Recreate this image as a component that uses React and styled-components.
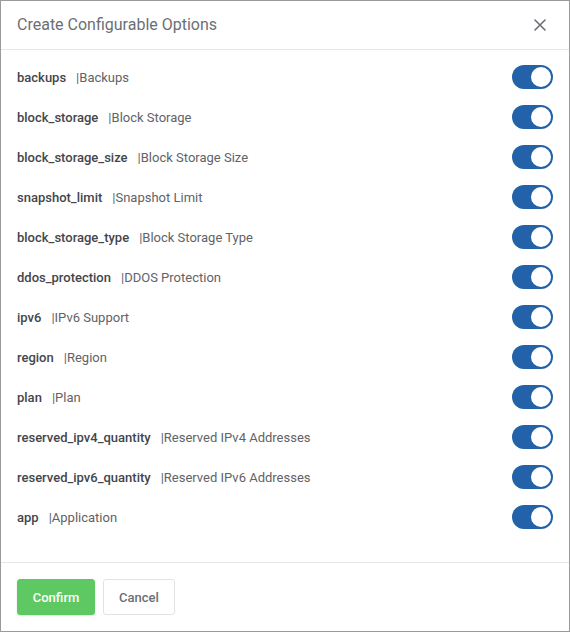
import React, { useState } from "react";
import styled, { createGlobalStyle } from "styled-components";

const Global = createGlobalStyle`
  html, body { margin: 0; padding: 0; background: #fff; }
  * { box-sizing: border-box; }
  body { font-family: Roboto, "Liberation Sans", Arial, sans-serif; }
`;

const Modal = styled.div`
  width: 570px;
  height: 632px;
  border: 1px solid #9b9b9b;
  background: #fff;
  display: flex;
  flex-direction: column;
`;

const Header = styled.div`
  height: 49px;
  display: flex;
  align-items: center;
  justify-content: space-between;
  padding: 0 16px 1px;
  border-bottom: 1px solid #e6e6ea;
`;

const Title = styled.h4`
  margin: 0;
  font-size: 16px;
  font-weight: 400;
  color: #6b6f75;
`;

const Close = styled.button`
  border: 0;
  background: transparent;
  padding: 0;
  width: 16px;
  height: 16px;
  display: flex;
  align-items: center;
  justify-content: center;
  margin-right: 5px;
  cursor: pointer;
`;

const Body = styled.div`
  flex: 1;
  padding: 7px 16px 0;
  display: flex;
  flex-direction: column;
`;

const Row = styled.div`
  height: 40px;
  display: flex;
  align-items: center;
  justify-content: space-between;
`;

const Label = styled.div`
  display: flex;
  align-items: center;
  font-size: 13px;
`;

const Key = styled.span`
  font-weight: 500;
  color: #43464b;
  margin-right: 10px;
`;

const Desc = styled.span`
  color: #5f6368;
`;

const Track = styled.button`
  width: 41px;
  height: 24px;
  border-radius: 12px;
  border: 0;
  padding: 2px;
  background: ${(p) => (p.$on ? "#2362a8" : "#c9ccd1")};
  display: flex;
  justify-content: ${(p) => (p.$on ? "flex-end" : "flex-start")};
  align-items: center;
  cursor: pointer;
`;

const Knob = styled.span`
  width: 20px;
  height: 20px;
  border-radius: 50%;
  background: #fff;
`;

const Footer = styled.div`
  border-top: 1px solid #e6e6ea;
  padding: 16px 16px 16px;
  display: flex;
  gap: 8px;
`;

const Button = styled.button`
  height: 36px;
  border-radius: 3px;
  font-family: inherit;
  font-size: 13px;
  font-weight: 500;
  cursor: pointer;
  border: 1px solid ${(p) => (p.$primary ? "#5ec962" : "#e2e3e6")};
  background: ${(p) => (p.$primary ? "#5ec962" : "#fff")};
  color: ${(p) => (p.$primary ? "#fff" : "#6b6f75")};
  width: ${(p) => p.$w}px;
  box-shadow: ${(p) => (p.$primary ? "0 1px 2px rgba(0,0,0,0.12)" : "none")};
`;

const options = [
  ["backups", "Backups"],
  ["block_storage", "Block Storage"],
  ["block_storage_size", "Block Storage Size"],
  ["snapshot_limit", "Snapshot Limit"],
  ["block_storage_type", "Block Storage Type"],
  ["ddos_protection", "DDOS Protection"],
  ["ipv6", "IPv6 Support"],
  ["region", "Region"],
  ["plan", "Plan"],
  ["reserved_ipv4_quantity", "Reserved IPv4 Addresses"],
  ["reserved_ipv6_quantity", "Reserved IPv6 Addresses"],
  ["app", "Application"],
];

export default function App() {
  const [state, setState] = useState(() => options.map(() => true));
  return (
    <>
      <Global />
      <Modal>
        <Header>
          <Title>Create Configurable Options</Title>
          <Close aria-label="Close">
            <svg width="12" height="12" viewBox="0 0 12 12">
              <path d="M1 1L11 11M11 1L1 11" stroke="#6b6f75" strokeWidth="1.6" strokeLinecap="round" />
            </svg>
          </Close>
        </Header>
        <Body>
          {options.map(([k, d], i) => (
            <Row key={k}>
              <Label>
                <Key>{k}</Key>
                <Desc>|{d}</Desc>
              </Label>
              <Track
                $on={state[i]}
                onClick={() => setState((s) => s.map((v, j) => (j === i ? !v : v)))}
              >
                <Knob />
              </Track>
            </Row>
          ))}
        </Body>
        <Footer>
          <Button $primary $w={78}>Confirm</Button>
          <Button $w={72}>Cancel</Button>
        </Footer>
      </Modal>
    </>
  );
}
